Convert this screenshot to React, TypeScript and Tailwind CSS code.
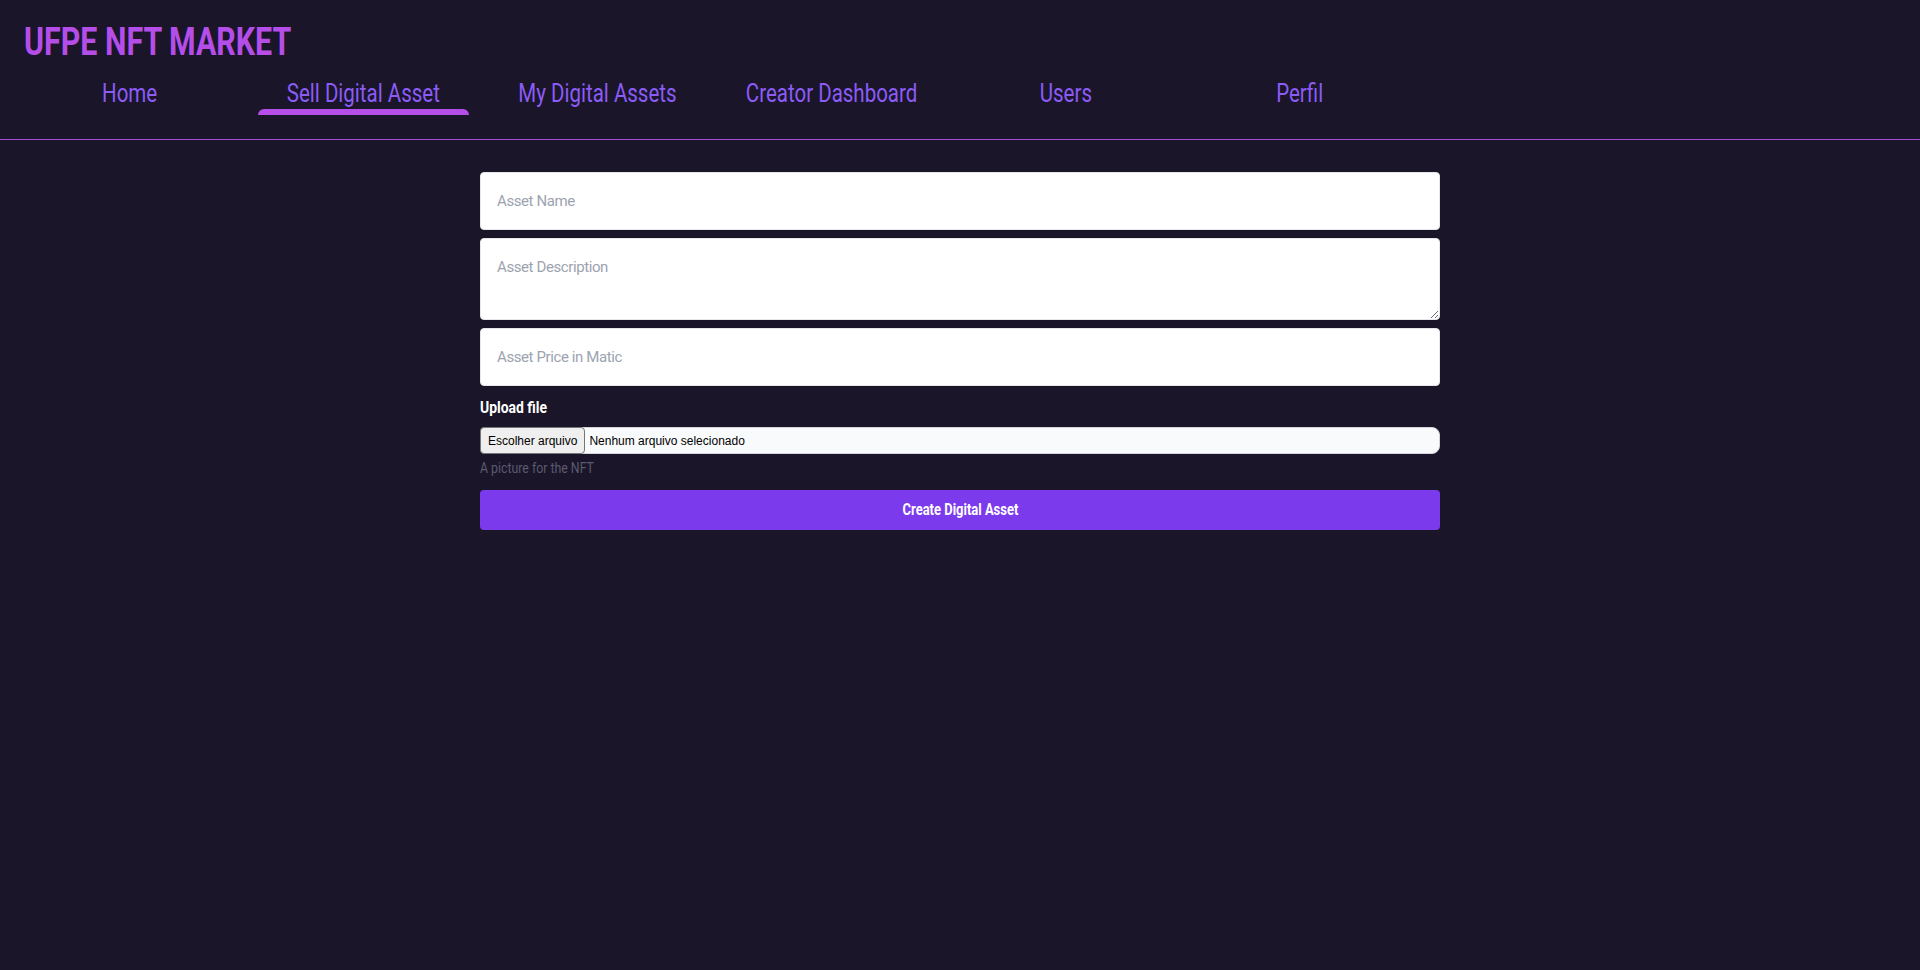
import React from "react";

const navItems = [
  "Home",
  "Sell Digital Asset",
  "My Digital Assets",
  "Creator Dashboard",
  "Users",
  "Perfil",
];

const fieldClass =
  "block w-full rounded-[4px] border border-[#e5e7eb] bg-white p-4 text-[15px] leading-6 tracking-[-0.4px] text-gray-900 outline-none placeholder:text-[#9ca3af]";

export default function App() {
  return (
    <div className="min-h-screen bg-[#1a1529] font-['Roboto',sans-serif]">
      <header className="border-b border-[#a24fd6] px-6 pt-[22px] pb-6">
        <h1 className="h-10 text-[38px] font-bold leading-[40px] text-[#b54ee8]">
          <span className="inline-block origin-left scale-x-[0.8]">UFPE NFT MARKET</span>
        </h1>
        <nav className="mt-[15px] flex gap-[23px]">
          {navItems.map((item) => (
            <a
              key={item}
              className="flex w-[211px] cursor-pointer flex-col items-center"
            >
              <span className="inline-block h-8 translate-y-[1px] scale-x-[0.82] whitespace-nowrap text-[25px] leading-8 text-[#8b5cf6]">
                {item}
              </span>
              <span
                className={
                  item === "Sell Digital Asset"
                    ? "h-[6px] w-full rounded-t-md bg-[#b54ee8]"
                    : "h-[6px] w-full"
                }
              />
            </a>
          ))}
        </nav>
      </header>

      <main className="flex justify-center pt-8">
        <div className="flex w-[960px] flex-col">
          <input placeholder="Asset Name" className={fieldClass} />
          <textarea
            rows={2}
            placeholder="Asset Description"
            className={"mt-2 " + fieldClass}
          />
          <input placeholder="Asset Price in Matic" className={"mt-2 " + fieldClass} />
          <label className="mt-[10px] mb-[7px] block text-base font-bold leading-6 text-white">
            <span className="inline-block origin-left scale-x-[0.87]">Upload file</span>
          </label>
          <div className="flex h-[27px] w-full items-center rounded-lg border border-[#d1d5db] bg-[#f9fafb] font-['Liberation_Sans',Arial,sans-serif] text-[12px] text-[#111827]">
            <span className="-ml-px flex h-[27px] items-center rounded-[4px] border border-[#767676] bg-[#efefef] px-[7px] text-black">
              Escolher arquivo
            </span>
            <span className="ml-[4px] text-black">Nenhum arquivo selecionado</span>
          </div>
          <p className="mt-1 text-sm leading-5 text-[#5b5a6e]">
            <span className="inline-block origin-left scale-x-[0.88]">A picture for the NFT</span>
          </p>
          <button className="mt-3 flex h-10 w-full items-center justify-center rounded-[4px] bg-[#7c3aed] text-base font-bold text-white">
            <span className="inline-block scale-x-[0.81]">Create Digital Asset</span>
          </button>
        </div>
      </main>
    </div>
  );
}
